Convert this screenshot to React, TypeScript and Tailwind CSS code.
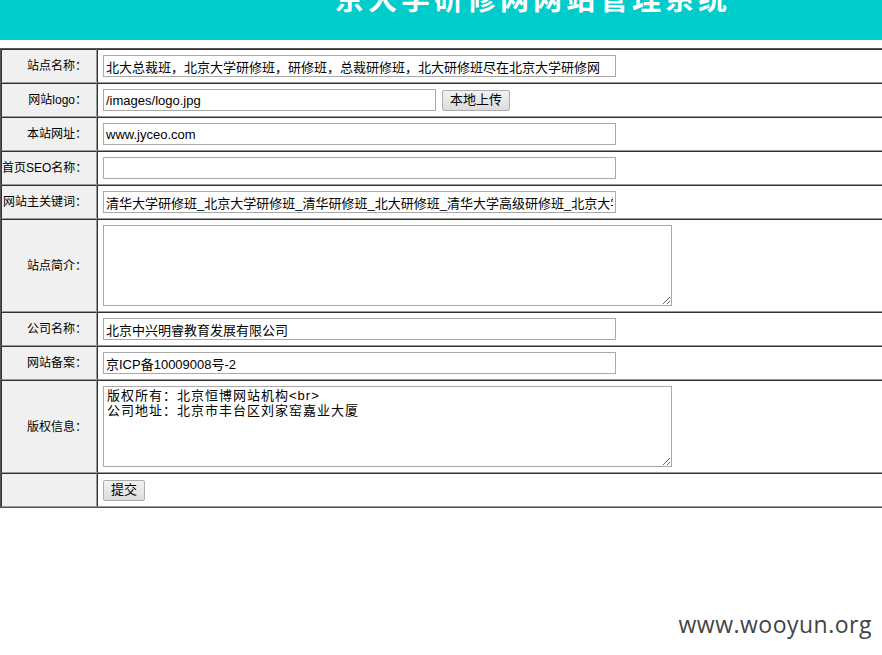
import React from "react";

const cellL =
  "border border-t-[#333] border-l-[#333] border-b-[#999] border-r-[#999] bg-[#f0f0f0] text-right pr-[9px] pl-0 text-[12px] leading-[14px] text-black align-middle whitespace-nowrap";
const cellR =
  "border border-t-[#333] border-l-[#333] border-b-[#999] border-r-[#999] bg-white px-[5px] py-0 align-middle leading-[14px]";
const inputCls =
  "block h-[22px] border border-[#a9a9a9] px-[2px] py-0 text-[13px] leading-[18px] text-black outline-none bg-white";
const btnCls =
  "block h-[21px] border border-[#adadad] rounded-[2px] bg-gradient-to-b from-[#f2f2f2] to-[#dcdcdc] text-[13px] leading-[18px] text-black";
const font = { fontFamily: '"Liberation Sans", "Noto Sans CJK SC", sans-serif' };

function Field({ label, children, tall }: { label: string; children?: React.ReactNode; tall?: boolean }) {
  const h = tall ? "h-[93px]" : "h-[34px]";
  return (
    <tr>
      <td className={`${cellL} ${h}`}>{label}</td>
      <td className={`${cellR} ${h}`}>{children}</td>
    </tr>
  );
}

export default function App() {
  return (
    <div className="relative h-[655px] w-full overflow-hidden bg-white" style={font}>
      <div className="h-[40px] bg-[#00cccc] overflow-hidden">
        <div className="ml-[335px] -mt-[15px] text-[29px] leading-[30px] font-bold tracking-[4px] text-white whitespace-nowrap">
          京大学研修网网站管理系统
        </div>
      </div>
      <div className="mt-[8px] overflow-hidden">
        <table className="w-[calc(100%+4px)] table-fixed border border-[#555] border-separate border-spacing-0">
          <colgroup>
            <col className="w-[96px]" />
            <col />
          </colgroup>
          <tbody>
            <Field label="站点名称：">
              <input
                className={`${inputCls} w-[513px]`}
                defaultValue="北大总裁班，北京大学研修班，研修班，总裁研修班，北大研修班尽在北京大学研修网"
              />
            </Field>
            <Field label="网站logo：">
              <div className="flex items-center gap-[6px]">
                <input className={`${inputCls} w-[333px]`} defaultValue="/images/logo.jpg" />
                <button className={`${btnCls} w-[68px]`}>本地上传</button>
              </div>
            </Field>
            <Field label="本站网址：">
              <input className={`${inputCls} w-[513px]`} defaultValue="www.jyceo.com" />
            </Field>
            <Field label="首页SEO名称：">
              <input className={`${inputCls} w-[513px]`} defaultValue="" />
            </Field>
            <Field label="网站主关键词：">
              <input
                className={`${inputCls} w-[513px]`}
                defaultValue="清华大学研修班_北京大学研修班_清华研修班_北大研修班_清华大学高级研修班_北京大学研修班"
              />
            </Field>
            <Field label="站点简介：" tall>
              <textarea className="block h-[81px] w-[569px] resize border border-[#a9a9a9] p-[2px] text-[13px] leading-[15px] outline-none" />
            </Field>
            <Field label="公司名称：">
              <input className={`${inputCls} w-[513px]`} defaultValue="北京中兴明睿教育发展有限公司" />
            </Field>
            <Field label="网站备案：">
              <input className={`${inputCls} w-[513px]`} defaultValue="京ICP备10009008号-2" />
            </Field>
            <Field label="版权信息：" tall>
              <textarea
                className="block h-[81px] w-[569px] resize border border-[#a9a9a9] px-[3px] py-[1px] text-[13px] leading-[15px] tracking-[1px] outline-none"
                defaultValue={"版权所有：北京恒博网站机构<br>\n公司地址：北京市丰台区刘家窑嘉业大厦"}
              />
            </Field>
            <Field label="">
              <button className={`${btnCls} w-[42px]`}>提交</button>
            </Field>
          </tbody>
        </table>
      </div>
      <div
        className="absolute right-[10px] bottom-[14px] text-[23px] text-[#444] tracking-[0.5px]"
        style={{ fontFamily: '"Open Sans", sans-serif' }}
      >
        www.wooyun.org
      </div>
    </div>
  );
}
